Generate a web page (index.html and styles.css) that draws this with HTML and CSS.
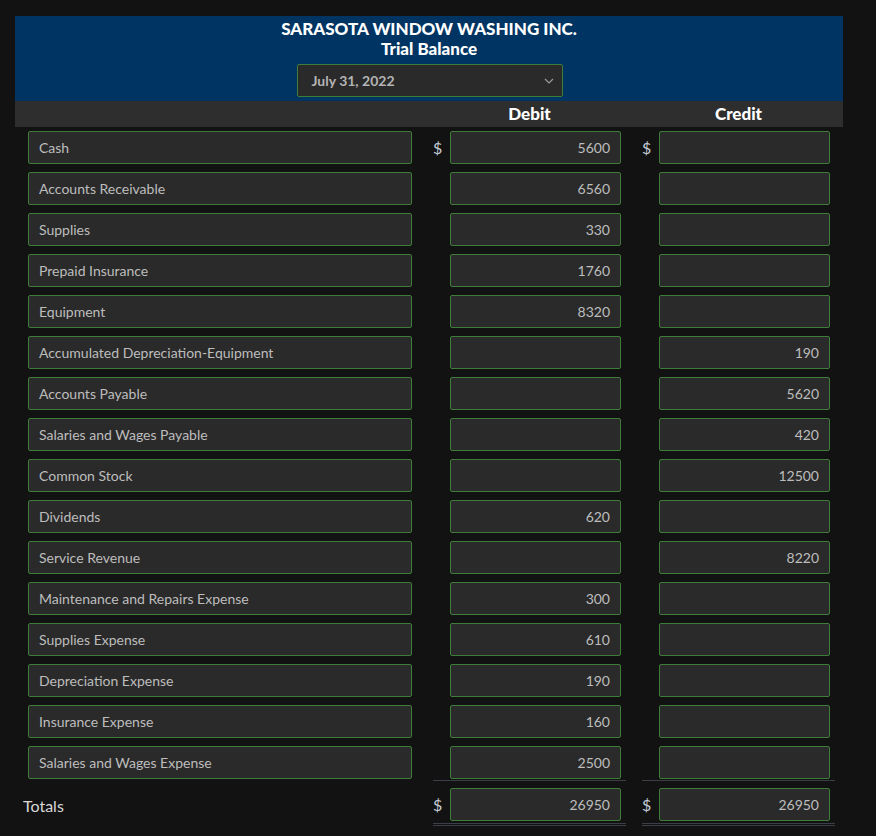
FILE: index.html
```html
<!DOCTYPE html>
<html lang="en">
<head>
  <meta charset="UTF-8" />
  <title>Trial Balance</title>
  <link rel="stylesheet" href="styles.css">
</head>
<body>

  <div class="sheet">

    <!-- Heading -->
    <header class="heading">
      <div class="company">SARASOTA WINDOW WASHING INC.</div>
      <div class="report">Trial Balance</div>
      <div class="date-select">
        <span>July 31, 2022</span>
        <svg width="10" height="6" viewBox="0 0 10 6"><path d="M1 1l4 4 4-4" fill="none" stroke="#9a9a9a" stroke-width="1.2"/></svg>
      </div>
    </header>

    <div class="col-heads">
      <div class="label-col"></div>
      <div class="amt debit">Debit</div>
      <div class="amt credit">Credit</div>
    </div>

    <!-- Accounts -->
    <main class="rows" id="rows"></main>

    <div class="row totals">
      <div class="label-col total-label">Totals</div>
      <div class="amt debit"><span class="cur">$</span><div class="field num">26950</div></div>
      <div class="amt credit"><span class="cur">$</span><div class="field num">26950</div></div>
    </div>

  </div>

  <script>
    const accounts = [
      ["Cash", "5600", ""],
      ["Accounts Receivable", "6560", ""],
      ["Supplies", "330", ""],
      ["Prepaid Insurance", "1760", ""],
      ["Equipment", "8320", ""],
      ["Accumulated Depreciation-Equipment", "", "190"],
      ["Accounts Payable", "", "5620"],
      ["Salaries and Wages Payable", "", "420"],
      ["Common Stock", "", "12500"],
      ["Dividends", "620", ""],
      ["Service Revenue", "", "8220"],
      ["Maintenance and Repairs Expense", "300", ""],
      ["Supplies Expense", "610", ""],
      ["Depreciation Expense", "190", ""],
      ["Insurance Expense", "160", ""],
      ["Salaries and Wages Expense", "2500", ""]
    ];

    const list = document.getElementById("rows");
    accounts.forEach((a, i) => {
      const cur = i === 0 ? "$" : "";
      const row = document.createElement("div");
      row.className = "row" + (i === accounts.length - 1 ? " last" : "");
      row.innerHTML = `
        <div class="label-col"><div class="field">${a[0]}</div></div>
        <div class="amt debit"><span class="cur">${cur}</span><div class="field num">${a[1]}</div></div>
        <div class="amt credit"><span class="cur">${cur}</span><div class="field num">${a[2]}</div></div>
      `;
      list.appendChild(row);
    });
  </script>
</body>
</html>
```

FILE: styles.css
```css
* { box-sizing: border-box; margin: 0; padding: 0; }
body {
  font-family: Lato, "Open Sans", sans-serif;
  background: #121212;
  color: #bdbdbd;
  padding: 16px 33px 0 15px;
}

.sheet {
  width: 828px;
}

.heading {
  background: #003462;
  color: #fff;
  display: flex;
  flex-direction: column;
  align-items: center;
  padding: 2px 0 4px;
}

.company {
  font-weight: 900;
  font-size: 17px;
  line-height: 22px;
}

.report {
  font-weight: 900;
  font-size: 17px;
  line-height: 20px;
  margin-top: -1px;
}

.date-select {
  width: 266px;
  height: 33px;
  margin-top: 5px;
  margin-left: 1px;
  background: #2a2a2a;
  border: 1px solid #3e7d38;
  border-radius: 2px;
  display: flex;
  align-items: center;
  justify-content: space-between;
  padding: 0 8px 0 14px;
  color: #b4b4b4;
  font-weight: bold;
  font-size: 14px;
}

.col-heads {
  background: #2e2e2e;
  height: 26px;
  display: flex;
  align-items: center;
  color: #fff;
  font-weight: 900;
  font-size: 17px;
  padding-bottom: 2px;
}

.col-heads .amt {
  justify-content: center;
}

.rows {
  padding-top: 4px;
}

.row {
  display: flex;
  align-items: center;
  margin-bottom: 8px;
}

.label-col {
  width: 384px;
  margin-left: 13px;
  flex-shrink: 0;
}

.amt {
  width: 193px;
  display: flex;
  align-items: center;
  flex-shrink: 0;
}

.amt.debit { margin-left: 21px; }
.amt.credit { margin-left: 16px; }

.cur {
  width: 17px;
  font-size: 16px;
  color: #c4ccd6;
}

.field {
  height: 33px;
  background: #2a2a2a;
  border: 1px solid #3e7d38;
  border-radius: 2px;
  font-size: 14px;
  line-height: 31px;
  padding: 0 10px;
  color: #bdbdbd;
  white-space: nowrap;
}

.field.num {
  width: 171px;
  text-align: right;
}

.row.last {
  margin-bottom: 0;
}

.row.last .amt {
  border-bottom: 1px solid #3a3f45;
  padding-bottom: 1px;
}

.row.last .amt,
.row.last .label-col {
  align-self: flex-start;
}

.totals {
  margin-top: 7px;
  align-items: flex-start;
}

.totals .amt {
  border-bottom: 3px double #3a3f45;
  padding-bottom: 2px;
}

.total-label {
  margin-left: 8px;
  width: 389px;
  font-size: 16px;
  line-height: 33px;
  padding-top: 1px;
  color: #d8d8d8;
}
```
